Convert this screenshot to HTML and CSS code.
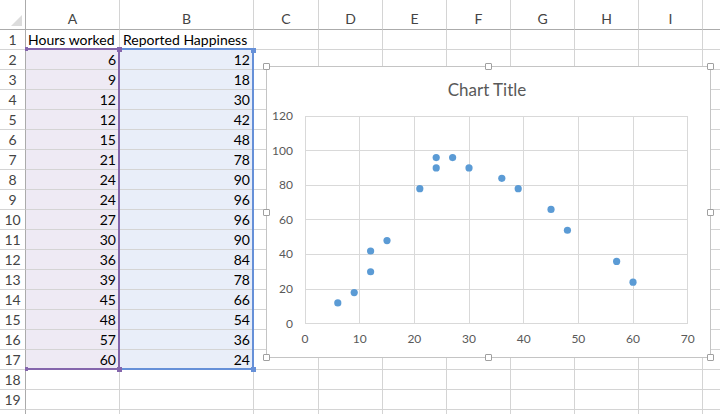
FILE: index.html
```html
<!DOCTYPE html>
<html lang="en">
<head>
  <meta charset="UTF-8">
  <title>Hours worked vs Reported Happiness</title>
  <link rel="stylesheet" href="styles.css">
</head>
<body>

  <div class="page">
    <!-- Worksheet grid, filled in by the script below -->
    <div class="sheet" id="sheet"></div>

    <!-- Selected ranges -->
    <div class="range range-a"></div>
    <div class="range range-b"></div>
    <span class="knob knob-a" style="left:117px; top:47px"></span>
    <span class="knob knob-a" style="left:117px; top:367px"></span>
    <span class="knob knob-a knob-edge" style="left:25px; top:47px"></span>
    <span class="knob knob-a knob-edge" style="left:25px; top:367px"></span>
    <span class="knob knob-b" style="left:251px; top:48px"></span>
    <span class="knob knob-b" style="left:251px; top:367px"></span>

    <!-- Scatter chart -->
    <div class="chart">
      <svg id="plot" width="443" height="290"></svg>
      <span class="handle" style="left:-4px; top:-4px"></span>
      <span class="handle" style="left:218px; top:-4px"></span>
      <span class="handle" style="left:440px; top:-4px"></span>
      <span class="handle" style="left:-4px; top:142px"></span>
      <span class="handle" style="left:440px; top:142px"></span>
      <span class="handle" style="left:-4px; top:287px"></span>
      <span class="handle" style="left:218px; top:287px"></span>
      <span class="handle" style="left:440px; top:287px"></span>
    </div>
  </div>

  <script>
    const data = [
      [6, 12], [9, 18], [12, 30], [12, 42], [15, 48], [21, 78], [24, 90], [24, 96],
      [27, 96], [30, 90], [36, 84], [39, 78], [45, 66], [48, 54], [57, 36], [60, 24]
    ];

    const sheet = document.getElementById('sheet');

    function addCell(cls, text) {
      const el = document.createElement('div');
      el.className = 'cell ' + cls;
      if (text !== undefined) el.textContent = text;
      sheet.appendChild(el);
      return el;
    }

    addCell('corner').innerHTML = '<span class="tri"></span>';
    ['A', 'B', 'C', 'D', 'E', 'F', 'G', 'H', 'I', ''].forEach(c => addCell('col-head', c));

    // row 20 only peeks in at the bottom edge, so it gets no number
    for (let r = 1; r <= 20; r++) {
      addCell('row-head', r < 20 ? r : '');
      if (r === 1) {
        addCell('label', 'Hours worked');
        addCell('label label-b', 'Reported Happiness');
      } else if (data[r - 2]) {
        addCell('num fill-a', data[r - 2][0]);
        addCell('num fill-b', data[r - 2][1]);
      } else {
        addCell('');
        addCell('');
      }
      for (let c = 0; c < 8; c++) addCell('');
    }

    // chart: plot area in svg coordinates
    const X0 = 38, X1 = 420.7, Y0 = 256.7, Y1 = 49;
    const sx = v => X0 + v * (X1 - X0) / 70;
    const sy = v => Y0 - v * (Y0 - Y1) / 120;

    let out = '<text class="title" x="220" y="29" text-anchor="middle">Chart Title</text>';
    for (let v = 0; v <= 120; v += 20) {
      const y = Math.floor(sy(v)) + 0.5;
      out += `<line class="grid" x1="${X0}" y1="${y}" x2="${Math.floor(X1) + 1}" y2="${y}"/>`;
      out += `<text class="tick" x="26" y="${sy(v) + 4}" text-anchor="end">${v}</text>`;
    }
    for (let v = 0; v <= 70; v += 10) {
      const x = Math.floor(sx(v)) + 0.5;
      out += `<line class="grid" x1="${x}" y1="${Y1}" x2="${x}" y2="${Math.floor(Y0) + 1}"/>`;
      out += `<text class="tick" x="${sx(v)}" y="276" text-anchor="middle">${v}</text>`;
    }
    data.forEach(([h, p]) => {
      out += `<circle class="dot" cx="${sx(h)}" cy="${sy(p)}" r="3.6"/>`;
    });
    document.getElementById('plot').innerHTML = out;
  </script>
</body>
</html>
```

FILE: styles.css
```css
body {
  margin: 0;
  background: #fff;
  font-family: Lato, 'Liberation Sans', sans-serif;
  overflow: hidden;
}
.page {
  position: relative;
  width: 720px;
  height: 414px;
  overflow: hidden;
}
.sheet {
  display: grid;
  grid-template-columns: 26px 94px 134px 65px 64px 64px 64px 64px 64px 64px 64px;
  grid-template-rows: 30px;
  grid-auto-rows: 20px;
}
.cell {
  box-sizing: border-box;
  border-right: 1px solid #d4d4d4;
  border-bottom: 1px solid #d4d4d4;
  font-size: 14px;
  line-height: 19px;
  color: #000;
  white-space: nowrap;
}
.corner {
  border-right-color: #ababab;
  border-bottom-color: #ababab;
}
.tri {
  display: block;
  width: 0;
  height: 0;
  margin: 15px 0 0 11px;
  border-left: 11px solid transparent;
  border-bottom: 11px solid #dcdcdc;
}
.col-head {
  border-bottom-color: #ababab;
  padding-top: 9px;
  line-height: 20px;
  text-align: center;
  color: #444;
}
.row-head {
  border-right-color: #ababab;
  text-align: center;
  color: #444;
}
.label {
  padding-left: 2px;
}
.label-b {
  padding-left: 3px;
}
.num {
  text-align: right;
  padding-right: 3px;
}
.fill-a {
  background: #eeeaf4;
}
.fill-b {
  background: #e9eef9;
}
.range {
  position: absolute;
  top: 48px;
  height: 322px;
  box-sizing: border-box;
  border: 2px solid;
  border-left: none;
}
.range-a {
  left: 26px;
  width: 94px;
  border-color: #8466ac;
}
.range-b {
  left: 120px;
  width: 134px;
  border-color: #6690d8;
}
.knob {
  position: absolute;
  width: 5px;
  height: 5px;
}
.knob-edge {
  width: 3px;
  height: 4px;
}
.knob-a {
  background: #8466ac;
}
.knob-b {
  background: #6690d8;
}
.chart {
  position: absolute;
  left: 266px;
  top: 66px;
  width: 445px;
  height: 292px;
  box-sizing: border-box;
  border: 1px solid #c4c4c4;
  background: #fff;
}
.chart svg {
  display: block;
}
.handle {
  position: absolute;
  width: 7px;
  height: 7px;
  box-sizing: border-box;
  background: #fff;
  border: 1px solid #a0a0a0;
  border-radius: 1px;
}
.grid {
  stroke: #d9d9d9;
  stroke-width: 1;
}
.tick {
  font-family: Lato, 'Liberation Sans', sans-serif;
  font-size: 12px;
  fill: #595959;
}
.title {
  font-family: Lato, 'Liberation Sans', sans-serif;
  font-size: 17px;
  fill: #595959;
}
.dot {
  fill: #5b9bd5;
}
```
